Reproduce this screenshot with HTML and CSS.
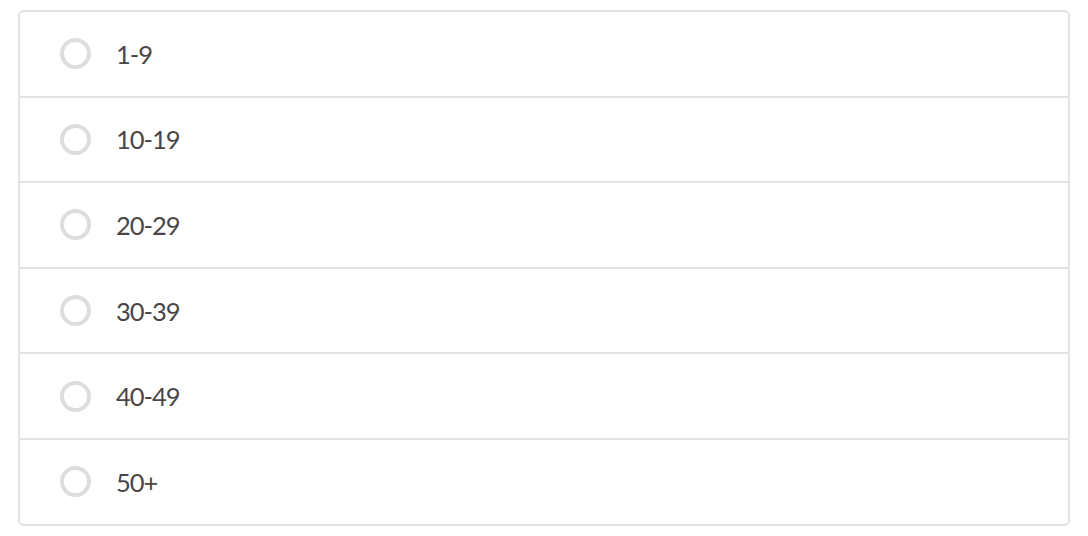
FILE: index.html
```html
<!DOCTYPE html>
<html>
<head>
<meta charset="utf-8">
<link rel="stylesheet" href="styles.css">
</head>
<body>
<div class="options">
  <label class="option"><span class="radio"></span><span class="text">1-9</span></label>
  <label class="option"><span class="radio"></span><span class="text">10-19</span></label>
  <label class="option"><span class="radio"></span><span class="text">20-29</span></label>
  <label class="option"><span class="radio"></span><span class="text">30-39</span></label>
  <label class="option"><span class="radio"></span><span class="text">40-49</span></label>
  <label class="option"><span class="radio"></span><span class="text">50+</span></label>
</div>
</body>
</html>
```
FILE: styles.css
```css
html, body {
  margin: 0;
  background: #ffffff;
}
body {
  padding: 10px 18px;
  font-family: Lato, "Open Sans", sans-serif;
}
.options {
  border: 2px solid #e3e3e3;
  border-radius: 6px;
  display: flex;
  flex-direction: column;
}
.option {
  height: 83.6px;
  display: flex;
  align-items: center;
  padding-left: 40px;
  gap: 25px;
}
.option + .option {
  border-top: 2px solid #e3e3e3;
}
.radio {
  width: 31px;
  height: 31px;
  box-sizing: border-box;
  border: 4px solid #dddddd;
  border-radius: 50%;
  flex: none;
}
.text {
  font-size: 25.5px;
  line-height: 30px;
  color: #4a4646;
  letter-spacing: -1px;
}
```
